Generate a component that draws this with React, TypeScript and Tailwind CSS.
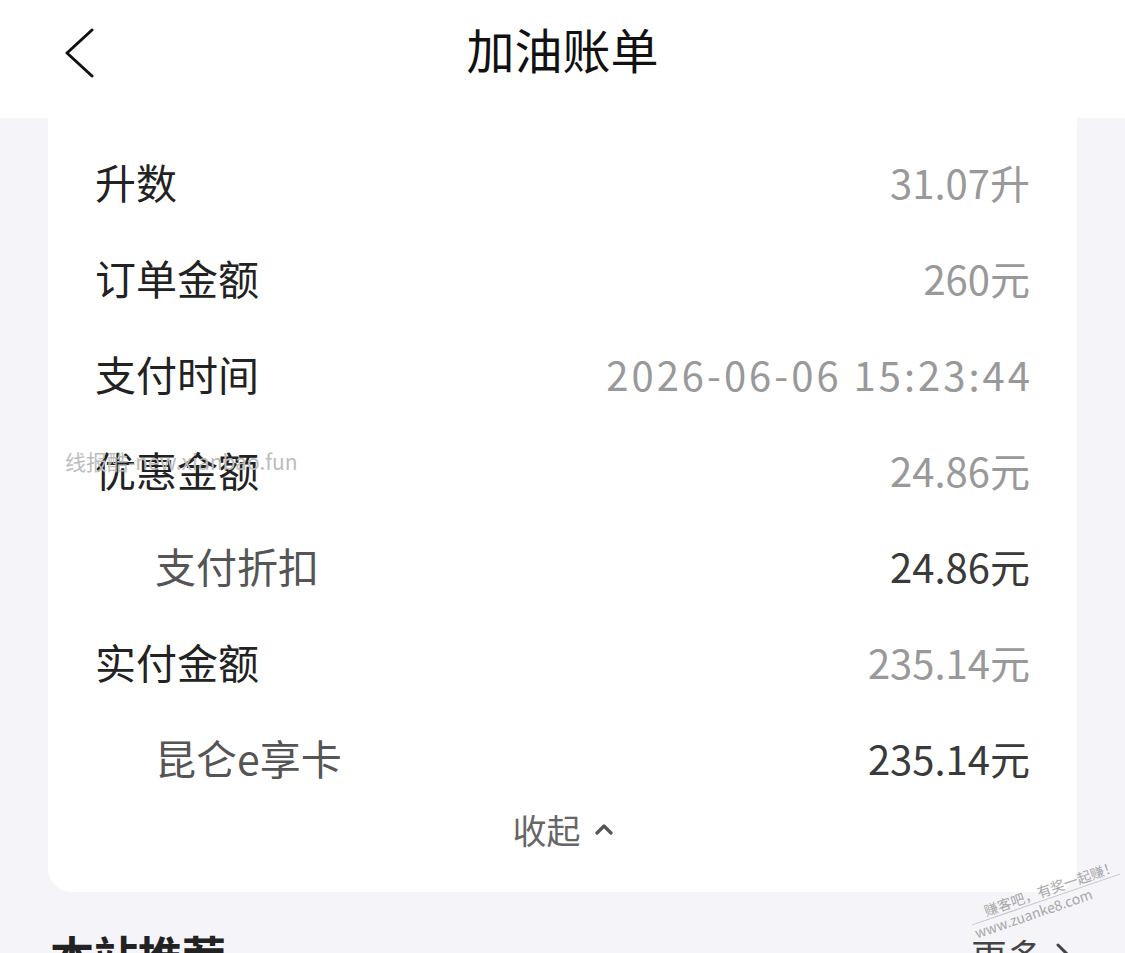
import React from 'react';

const rows = [
  { label: '升数', value: '31.07升', sub: false },
  { label: '订单金额', value: '260元', sub: false },
  { label: '支付时间', value: '2026-06-06 15:23:44', sub: false },
  { label: '优惠金额', value: '24.86元', sub: false },
  { label: '支付折扣', value: '24.86元', sub: true },
  { label: '实付金额', value: '235.14元', sub: false },
  { label: '昆仑e享卡', value: '235.14元', sub: true },
];

export default function App() {
  return (
    <div
      className="w-[1125px] h-[953px] overflow-hidden bg-[#f5f5f9] relative"
      style={{ fontFamily: '"Noto Sans CJK SC", "Noto Sans", sans-serif' }}
    >
      {/* Header */}
      <div className="h-[118px] bg-white relative flex items-center justify-center">
        <svg className="absolute left-[62px] top-[28px]" width="34" height="52" viewBox="0 0 34 52" fill="none">
          <polyline points="30,2 5,25 30,48" stroke="#111" strokeWidth="3" strokeLinecap="round" strokeLinejoin="round" />
        </svg>
        <div className="text-[48px] leading-none text-[#111] -mt-[22px]">加油账单</div>
      </div>

      {/* Bill card */}
      <div className="mx-[48px] bg-white rounded-b-[24px] pt-[16px] pb-[40px]">
        {rows.map((r) => (
          <div key={r.label} className="h-[96px] flex items-center justify-between pl-[47px] pr-[47px]">
            <div
              className={
                r.sub
                  ? 'pl-[60px] text-[41px] text-[#555]'
                  : 'text-[41px] text-[#222]'
              }
            >
              {r.label}
            </div>
            <div
              className={
                (r.sub ? 'text-[40px] text-[#3a3a3a]' : 'text-[40px] text-[#999]') +
                (r.label === '支付时间' ? ' tracking-[3px] -mr-[3px]' : '')
              }
            >
              {r.value}
            </div>
          </div>
        ))}
        <div className="h-[46px] flex items-center justify-center gap-[14px] text-[34px] text-[#666]">
          <span>收起</span>
          <svg width="18" height="12" viewBox="0 0 18 12" fill="none">
            <polyline points="2,10 9,3 16,10" stroke="#555" strokeWidth="3.2" strokeLinecap="round" strokeLinejoin="round" />
          </svg>
        </div>
      </div>

      {/* Recommend section */}
      <div className="flex items-center justify-between pl-[50px] pr-[54px] mt-[30px]">
        <div className="text-[44px] font-bold text-[#222]">本站推荐</div>
        <div className="flex items-center gap-[12px] text-[36px] text-[#444]">
          <span>更多</span>
          <svg width="16" height="26" viewBox="0 0 16 26" fill="none">
            <polyline points="3,3 13,13 3,23" stroke="#444" strokeWidth="3" strokeLinecap="round" strokeLinejoin="round" />
          </svg>
        </div>
      </div>

      {/* Watermarks */}
      <div className="absolute left-[65px] top-[451px] text-[21px] text-[#bdbdbd] leading-none">
        线报酷-new.xianbao.fun
      </div>
      <div className="absolute left-[968px] top-[882px] -rotate-[19deg] text-[14px] leading-[17px] text-[#a8a8a8]">
        <div className="border-b border-[#c4c4c4] pl-[16px]">赚客吧，有奖一起赚！</div>
        <div>www.zuanke8.com</div>
      </div>
    </div>
  );
}
